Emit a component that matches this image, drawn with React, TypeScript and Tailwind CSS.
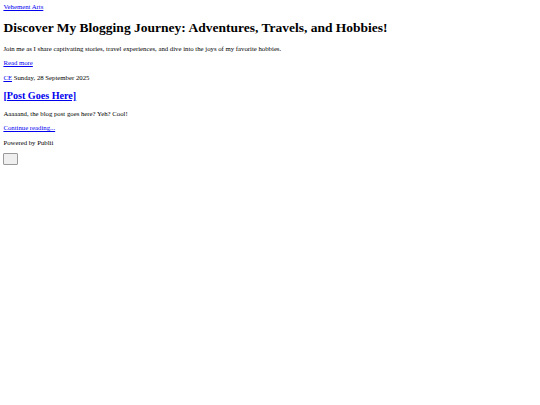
import React from 'react';

const link = 'text-[#0000ee] underline';

const App: React.FC = () => {
  return (
    <div className="min-h-screen bg-white p-[3.4px] font-['Liberation_Serif',serif] text-[6.75px] leading-[1.15] text-black">
      <header>
        <a href="#" className={link}>Vehement Arts</a>
        <h1 className="my-[9px] text-[13.5px] font-bold leading-[1.15]">
          Discover My Blogging Journey: Adventures, Travels, and Hobbies!
        </h1>
        <p className="my-[6.75px]">
          Join me as I share captivating stories, travel experiences, and dive into the joys of my favorite hobbies.
        </p>
        <p className="my-[6.75px]">
          <a href="#" className={link}>Read more</a>
        </p>
      </header>

      <main>
        <article>
          <div className="my-[6.75px]">
            <a href="#" className={link}>CE</a> Sunday, 28 September 2025
          </div>
          <h2 className="my-[8.4px] text-[10.125px] font-bold leading-[1.15]">
            <a href="#" className={link}>[Post Goes Here]</a>
          </h2>
          <p className="my-[6.75px]">Aaaaand, the blog post goes here? Yeh? Cool!</p>
          <p className="my-[6.75px]">
            <a href="#" className={link}>Continue reading...</a>
          </p>
        </article>
      </main>

      <footer>
        <p className="my-[6.75px]">Powered by Publii</p>
        <button className="block h-[12px] w-[15px] rounded-[1px] border border-[#9a9a9a] bg-[#efefef]" />
      </footer>
    </div>
  );
};

export default App;
